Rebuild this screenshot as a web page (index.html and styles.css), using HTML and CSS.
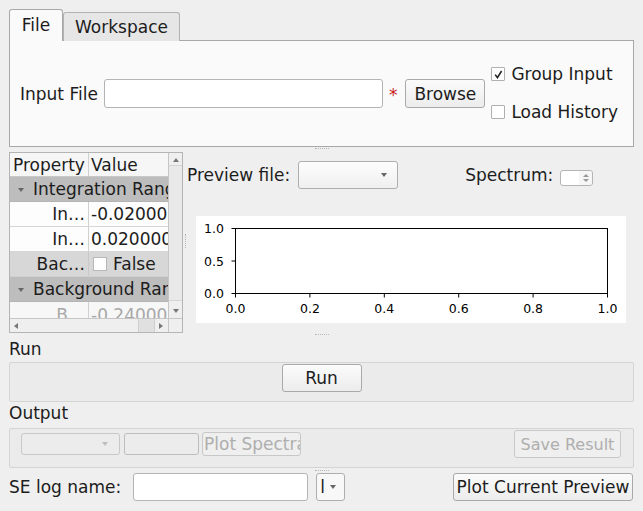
FILE: index.html
```html
<!DOCTYPE html>
<html>
<head>
<meta charset="utf-8">
<title>Indirect Data Reduction</title>
<link rel="stylesheet" href="styles.css">
</head>
<body>
<div class="app">
  <div class="tabs">
    <div class="tabbar">
      <div class="tab active">File</div>
      <div class="tab">Workspace</div>
    </div>
    <div class="tabpanel">
      <span class="lbl">Input File</span>
      <div class="lineedit file-edit"></div>
      <span class="req">*</span>
      <button class="btn browse">Browse</button>
      <div class="checks">
        <div class="check"><span class="box"><svg width="11" height="11" viewBox="0 0 11 11"><polyline points="2.2,5.6 4.4,8.6 8.6,2" fill="none" stroke="#222" stroke-width="1.6"/></svg></span>Group Input</div>
        <div class="check"><span class="box"></span>Load History</div>
      </div>
    </div>
  </div>

  <div class="hsplit"><span class="dots"></span></div>

  <div class="middle">
    <div class="tree">
      <div class="tree-main">
        <div class="rows">
          <div class="row head"><div class="c1">Property</div><div class="c2">Value</div></div>
          <div class="row group"><span class="arrow"></span><span class="gtext">Integration Range</span></div>
          <div class="row item"><div class="c1 r">In…</div><div class="c2">-0.020000</div></div>
          <div class="row item"><div class="c1 r">In…</div><div class="c2">0.020000</div></div>
          <div class="row item alt"><div class="c1 r">Bac…</div><div class="c2"><span class="cb"></span>False</div></div>
          <div class="row group"><span class="arrow"></span><span class="gtext">Background Range</span></div>
          <div class="row item dis"><div class="c1 r">B…</div><div class="c2">-0.240000</div></div>
        </div>
        <div class="vscroll">
          <span class="sarrow up"></span>
          <div class="vtrack"><div class="vthumb"></div></div>
          <span class="sarrow down"></span>
        </div>
      </div>
      <div class="hscroll">
        <div class="htrack">
          <span class="sarrow left"></span>
          <div class="hfill"></div>
          <div class="hthumb"></div>
          <span class="sarrow right"></span>
        </div>
        <div class="corner"></div>
      </div>
    </div>

    <div class="vsplit"><span class="vdots"></span></div>

    <div class="preview">
      <div class="prow">
        <span class="lbl">Preview file:</span>
        <div class="combo pf"><span class="carrow"></span></div>
        <span class="lbl spec">Spectrum:</span>
        <div class="spin"><div class="spin-edit"></div><div class="spin-btns"><span class="su"></span><span class="sd"></span></div></div>
      </div>
      <div class="plot">
        <svg width="430" height="107" viewBox="0 0 430 107" class="plotsvg">
          <rect x="39.5" y="12.5" width="372" height="65" fill="#fff" stroke="#000" stroke-width="1"/>
          <g stroke="#000" stroke-width="1">
            <line x1="39.5" y1="78" x2="39.5" y2="81.5"/>
            <line x1="113.9" y1="78" x2="113.9" y2="81.5"/>
            <line x1="188.3" y1="78" x2="188.3" y2="81.5"/>
            <line x1="262.7" y1="78" x2="262.7" y2="81.5"/>
            <line x1="337.1" y1="78" x2="337.1" y2="81.5"/>
            <line x1="411.5" y1="78" x2="411.5" y2="81.5"/>
            <line x1="35.5" y1="12.5" x2="39" y2="12.5"/>
            <line x1="35.5" y1="45" x2="39" y2="45"/>
            <line x1="35.5" y1="77.5" x2="39" y2="77.5"/>
          </g>
          <g font-family="DejaVu Sans, sans-serif" font-size="12.5" fill="#000" text-anchor="middle">
            <text x="39.5" y="97">0.0</text>
            <text x="113.9" y="97">0.2</text>
            <text x="188.3" y="97">0.4</text>
            <text x="262.7" y="97">0.6</text>
            <text x="337.1" y="97">0.8</text>
            <text x="411.5" y="97">1.0</text>
          </g>
          <g font-family="DejaVu Sans, sans-serif" font-size="12.5" fill="#000" text-anchor="end">
            <text x="28" y="17">1.0</text>
            <text x="28" y="49.5">0.5</text>
            <text x="28" y="82">0.0</text>
          </g>
        </svg>
      </div>
    </div>
  </div>

  <div class="hsplit low"><span class="dots"></span></div>

  <div class="section-label">Run</div>
  <div class="groupbox run-box">
    <button class="btn run">Run</button>
  </div>

  <div class="section-label out">Output</div>
  <div class="groupbox out-box">
    <div class="combo dcombo"><span class="carrow"></span></div>
    <div class="dbox"></div>
    <button class="btn dbtn plot-spectra">Plot Spectra</button>
    <button class="btn dbtn save">Save Result</button>
  </div>

  <div class="hsplit bot"><span class="dots"></span></div>

  <div class="bottom">
    <span class="lbl">SE log name:</span>
    <div class="lineedit se-edit"></div>
    <div class="combo secombo"><span class="stext">l</span><span class="carrow"></span></div>
    <button class="btn pcp">Plot Current Preview</button>
  </div>
</div>
</body>
</html>
```

FILE: styles.css
```css
* { box-sizing: border-box; }
html, body { margin: 0; padding: 0; }
body {
  width: 643px;
  height: 511px;
  overflow: hidden;
  background: #efefef;
  font-family: "DejaVu Sans", sans-serif;
  font-size: 17px;
  color: #1c1c1c;
}
.app {
  display: flex;
  flex-direction: column;
  padding: 9px 9px 0 9px;
}

/* tabs */
.tabbar {
  display: flex;
  align-items: flex-end;
  height: 32px;
  margin-bottom: -1px;
}
.tab {
  height: 29px;
  padding: 0 12px;
  display: flex;
  align-items: center;
  background: #e6e6e6;
  border: 1px solid #b2b2b2;
  border-bottom: none;
  border-radius: 3px 3px 0 0;
  width: 117px;
  justify-content: center;
}
.tab.active {
  width: 54px;
  height: 32px;
  background: #fafafa;
  border-color: #a8a8a8;
  z-index: 2;
  padding-bottom: 2px;
}
.tabpanel {
  height: 107px;
  background: #fafafa;
  border: 1px solid #a8a8a8;
  display: flex;
  align-items: center;
  padding-left: 10px;
}
.lbl { white-space: nowrap; }
.lineedit {
  background: #fff;
  border: 1px solid #b4b4b4;
  border-radius: 3px;
}
.file-edit {
  width: 279px;
  height: 29px;
  margin-left: 6px;
}
.req {
  color: #c81e1e;
  margin: 0 8px 0 6px;
  position: relative;
  top: 1px;
}
.btn {
  font-family: "DejaVu Sans", sans-serif;
  font-size: 17px;
  color: #1c1c1c;
  background: linear-gradient(#fbfbfb, #ececec);
  border: 1px solid #a9a9a9;
  border-radius: 3px;
  padding: 0;
  white-space: nowrap;
}
.browse { width: 80px; height: 29px; }
.checks {
  display: flex;
  flex-direction: column;
  gap: 18px;
  margin-left: 6px;
  margin-top: -1px;
}
.check {
  display: flex;
  align-items: center;
  height: 20px;
  white-space: nowrap;
}
.box {
  width: 14px;
  height: 14px;
  background: #fff;
  border: 1px solid #b0b0b0;
  border-radius: 1px;
  margin-right: 6px;
  display: flex;
  align-items: center;
  justify-content: center;
}

/* splitters */
.hsplit {
  height: 5px;
  display: flex;
  justify-content: center;
  padding-top: 1px;
}
.dots {
  width: 14px;
  height: 1px;
  border-top: 1px dotted #b8b8b8;
}
.hsplit.low { height: 5px; padding-top: 1px; }
.hsplit.bot { height: 5px; padding-top: 2px; }

/* middle */
.middle {
  display: flex;
  height: 181px;
}
.tree {
  width: 174px;
  height: 181px;
  border: 1px solid #b4b4b4;
  display: flex;
  flex-direction: column;
  background: #efefef;
}
.tree-main {
  display: flex;
  height: 165px;
}
.rows {
  width: 158px;
  overflow: hidden;
  background: #fff;
}
.row {
  display: flex;
  height: 25px;
  border-bottom: 1px solid #d6d6d6;
  white-space: nowrap;
  align-items: center;
}
.row.head {
  height: 24px;
  background: #f6f6f6;
  border-bottom: 1px solid #c8c8c8;
}
.c1 {
  width: 79px;
  flex: none;
  height: 100%;
  display: flex;
  align-items: center;
  padding-left: 3px;
  border-right: 1px solid #d0d0d0;
  overflow: hidden;
}
.c1.r { justify-content: flex-end; padding-right: 3px; padding-left: 0; }
.c2 {
  flex: none;
  width: 79px;
  height: 100%;
  display: flex;
  align-items: center;
  padding-left: 2px;
  overflow: hidden;
}
.row.group {
  background: #bdbdbd;
  border-bottom: 1px solid #b4b4b4;
}
.arrow {
  width: 0; height: 0;
  border-left: 3.5px solid transparent;
  border-right: 3.5px solid transparent;
  border-top: 4px solid #666;
  margin: 1px 9px 0 8px;
}
.row.item { background: #fdfdfd; }
.row.item.alt { background: #d7d7d7; border-bottom-color: #cfcfcf; }
.row.item.alt .c1 { border-right-color: #c9c9c9; }
.cb {
  width: 14px;
  height: 14px;
  background: #fff;
  border: 1px solid #b8b8b8;
  margin: 0 6px 0 2px;
}
.row.item.dis { color: #a8a8a8; background: #f7f7f7; border-bottom: none; height: 17px; align-items: flex-end; }
.row.item.dis .c1, .row.item.dis .c2 { align-items: flex-start; padding-top: 3px; }

.vscroll {
  width: 14px;
  border-left: 1px solid #c6c6c6;
  background: #efefef;
  display: flex;
  flex-direction: column;
  align-items: center;
}
.vtrack {
  flex: 1;
  width: 100%;
  padding: 2px 0;
}
.vthumb {
  height: 136px;
  margin-top: 1px;
  border-top: 1px solid #d4d4d4;
  border-bottom: 1px solid #d4d4d4;
  background: #e9e9e9;
}
.sarrow { width: 0; height: 0; flex: none; }
.sarrow.up {
  border-left: 3.5px solid transparent;
  border-right: 3.5px solid transparent;
  border-bottom: 4px solid #777;
  margin-top: 5px;
}
.sarrow.down {
  border-left: 3.5px solid transparent;
  border-right: 3.5px solid transparent;
  border-top: 4px solid #777;
  margin-bottom: 5px;
}
.hscroll {
  height: 14px;
  display: flex;
  border-top: 1px solid #c6c6c6;
}
.htrack {
  width: 158px;
  display: flex;
  align-items: center;
  background: #efefef;
}
.sarrow.left {
  border-top: 3.5px solid transparent;
  border-bottom: 3.5px solid transparent;
  border-right: 4px solid #777;
  margin-left: 4px;
}
.hfill { flex: 1; }
.hthumb {
  width: 17px;
  height: 100%;
  background: #e0e0e0;
  border-left: 1px solid #d0d0d0;
  border-right: 1px solid #d0d0d0;
  margin-right: 4px;
}
.sarrow.right {
  border-top: 3.5px solid transparent;
  border-bottom: 3.5px solid transparent;
  border-left: 4px solid #777;
  margin-right: 5px;
}
.corner {
  flex: 1;
  border-left: 1px solid #c6c6c6;
  background: #efefef;
}

.vsplit {
  width: 4px;
  display: flex;
  align-items: center;
  justify-content: center;
}
.vdots {
  width: 1px;
  height: 14px;
  border-left: 1px dotted #b8b8b8;
  margin-top: -4px;
}

.preview {
  flex: 1;
  display: flex;
  flex-direction: column;
  padding-top: 9px;
}
.prow {
  display: flex;
  align-items: center;
  height: 28px;
}
.combo {
  background: linear-gradient(#fdfdfd, #f0f0f0);
  border: 1px solid #aeaeae;
  border-radius: 3px;
  display: flex;
  align-items: center;
  justify-content: flex-end;
}
.carrow {
  width: 0; height: 0;
  border-left: 3.5px solid transparent;
  border-right: 3.5px solid transparent;
  border-top: 4px solid #666;
}
.combo.pf {
  width: 100px;
  height: 28px;
  margin-left: 8px;
  padding-right: 10px;
}
.spec { margin-left: 67px; }
.spin {
  width: 33px;
  height: 16px;
  margin-left: 7px;
  border: 1px solid #b4b4b4;
  border-radius: 3px;
  display: flex;
  background: #fff;
  margin-top: 6px;
}
.spin-edit { flex: 1; }
.spin-btns {
  width: 13px;
  display: flex;
  flex-direction: column;
  align-items: center;
  justify-content: center;
  gap: 2px;
  background: #f6f6f6;
  border-radius: 0 3px 3px 0;
}
.su { width: 0; height: 0; border-left: 3px solid transparent; border-right: 3px solid transparent; border-bottom: 3px solid #999; }
.sd { width: 0; height: 0; border-left: 3px solid transparent; border-right: 3px solid transparent; border-top: 3px solid #999; }

.plot {
  width: 430px;
  height: 107px;
  margin: 27px 0 0 9px;
  background: #fff;
}
.plotsvg { display: block; }

/* lower */
.section-label {
  height: 24px;
  line-height: 22px;
  font-size: 17px;
}
.section-label.out { height: 26px; line-height: 23px; }
.groupbox {
  height: 40px;
  background: #ebebeb;
  border: 1px solid #d4d4d4;
  border-radius: 2px;
}
.run-box {
  display: flex;
  justify-content: center;
  align-items: flex-start;
  padding-top: 1px;
}
.run {
  width: 80px;
  height: 28px;
}
.out-box {
  display: flex;
  align-items: flex-start;
  padding: 0 12px 0 11px;
}
.dcombo {
  width: 99px;
  height: 22px;
  margin-top: 4px;
  padding-right: 11px;
  background: #ececec;
  border-color: #c8c8c8;
}
.dcombo .carrow { border-top-color: #bdbdbd; }
.dbox {
  width: 75px;
  height: 22px;
  margin: 4px 0 0 4px;
  border: 1px solid #bdbdbd;
  border-radius: 3px;
  background: #ececec;
}
.dbtn {
  color: #aeaeae;
  background: #efefef;
  border-color: #c8c8c8;
}
.plot-spectra {
  width: 99px;
  height: 24px;
  margin: 3px 0 0 3px;
  text-align: left;
  padding-left: 1px;
  overflow: hidden;
}
.save {
  width: 107px;
  height: 28px;
  margin: 1px 0 0 auto;
  overflow: hidden;
  font-size: 16px;
}
.bottom {
  display: flex;
  align-items: center;
  height: 28px;
}
.se-edit {
  width: 175px;
  height: 28px;
  margin-left: 12px;
}
.secombo {
  width: 29px;
  height: 28px;
  margin-left: 8px;
  justify-content: space-between;
  padding: 0 8px 0 3px;
  background: #f8f8f8;
}
.stext { font-size: 17px; }
.pcp {
  width: 180px;
  height: 28px;
  margin-left: auto;
  margin-right: 1px;
}
```
